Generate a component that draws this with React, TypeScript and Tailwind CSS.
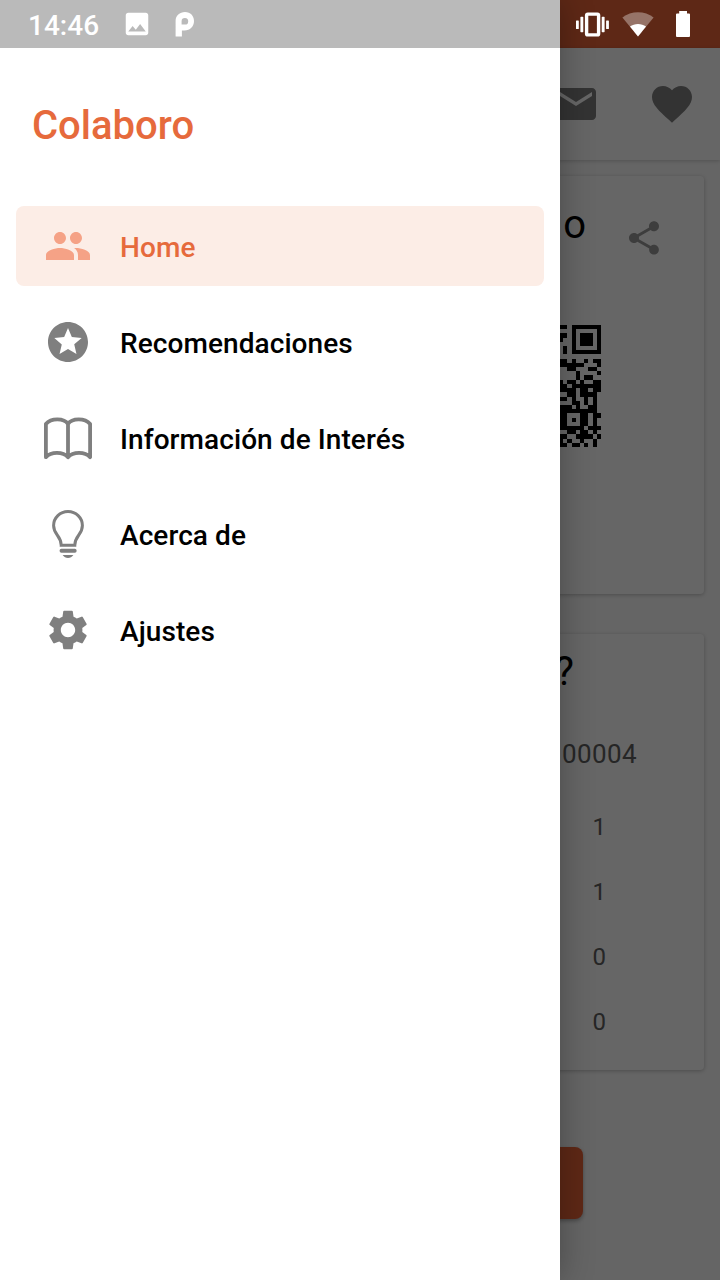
// Colaboro app shell: the home page dimmed behind the open navigation drawer.

import type { ReactNode } from "react";
import {
  MdEmail,
  MdFavorite,
  MdImage,
  MdPeople,
  MdSettings,
  MdShare,
  MdStars,
} from "react-icons/md";

function BookIcon() {
  return (
    <svg viewBox="0 0 48 44" className="mt-px h-11 w-12" fill="none" stroke="currentColor" strokeWidth="3.8" strokeLinejoin="round">
      <path d="M24 7C20 .8 7 .8 1.9 7V40.2C7 34.5 19 34.5 24 40.2C29 34.5 41 34.5 46.1 40.2V7C41 .8 28 .8 24 7ZM24 7V40.2" />
    </svg>
  );
}

function BulbIcon() {
  return (
    <svg viewBox="0 0 32 48" className="h-12 w-8" fill="none" stroke="currentColor" strokeWidth="3">
      <path d="M9.2 35.2C9.2 25.5 1.6 25 1.6 15.5A14.4 14 0 0 1 30.4 15.5C30.4 25 22.8 25.5 22.8 35.2Z" />
      <rect x="7.6" y="38.8" width="17" height="4" rx="1.8" fill="currentColor" stroke="none" />
      <path d="M10.6 45H21.4C20 47 18.2 48 16 48S12 47 10.6 45Z" fill="currentColor" stroke="none" />
    </svg>
  );
}

function ParkingIcon() {
  return (
    <svg viewBox="0 0 19 25" className="h-[25px] w-[19px]" fill="currentColor">
      <path
        fillRule="evenodd"
        d="M.6 24.6V9C.6 3.6 4.8 0 10 0C15.5 0 19 4 19 8.9C19 14.5 15 18.4 9.5 18.4H6.9V24.6ZM6.6 12.6H9.7A3.3 3.3 0 1 0 6.6 9.3Z"
      />
    </svg>
  );
}

function VibrateIcon() {
  return (
    <svg viewBox="0 0 33 25" className="h-[25px] w-[33px]" fill="currentColor">
      <rect x="10.6" y="2.1" width="12" height="20.8" rx="1.2" fill="none" stroke="currentColor" strokeWidth="3.4" />
      <rect x="4.4" y="4.8" width="2.9" height="15.4" rx=".6" />
      <rect x="0" y="8.4" width="2.8" height="8.6" rx=".6" />
      <rect x="25.7" y="4.8" width="2.9" height="15.4" rx=".6" />
      <rect x="30.1" y="8.4" width="2.8" height="8.6" rx=".6" />
    </svg>
  );
}

function WifiIcon() {
  return (
    <svg viewBox="0 0 32 25" className="h-[25px] w-8" fill="currentColor">
      <path d="M16 24.5L.4 5.4C9-1.6 23-1.6 31.6 5.4Z" opacity="0.35" />
      <path d="M16 24.5L8 14.6C12.4 11 19.6 11 24 14.6Z" />
    </svg>
  );
}

function BatteryIcon() {
  return (
    <svg viewBox="0 0 14 26" className="h-[26px] w-3.5" fill="currentColor">
      <path d="M3.2 0H11V2.5H13Q14 2.5 14 3.5V25Q14 26 13 26H1Q0 26 0 25V3.5Q0 2.5 1 2.5H3.2Z" />
    </svg>
  );
}

/** Right-hand columns of the membership code, one string per module row. */
const QR_ROWS: ReadonlyArray<string> = [
  "1101111111",
  "0001000001",
  "1101011101",
  "1001011101",
  "0001011101",
  "0101000001",
  "0101111111",
  "0000000000",
  "1101001011",
  "1111110001",
  "0011000110",
  "0000100001",
  "0000101100",
  "1011010011",
  "1101111111",
  "1111011011",
  "0011011110",
  "1101001010",
  "0001101010",
  "1110100110",
  "1111111110",
  "1100011011",
  "1101011010",
  "1100011010",
  "1111110111",
  "0011011010",
  "1100111101",
  "1010010010",
  "1101101010",
];

function QrCode() {
  return (
    <svg viewBox="0 0 10 29" className="h-[122px] w-[42px]" preserveAspectRatio="none" shapeRendering="crispEdges">
      {QR_ROWS.map((row, y) =>
        row.split("").map((cell, x) =>
          cell === "1" ? <rect key={`${x}-${y}`} x={x} y={y} width="1" height="1" /> : null,
        ),
      )}
    </svg>
  );
}

const MENU: ReadonlyArray<{ label: string; icon: ReactNode; active?: boolean }> = [
  { label: "Home", icon: <MdPeople size={48} />, active: true },
  { label: "Recomendaciones", icon: <MdStars size={48} /> },
  { label: "Información de Interés", icon: <BookIcon /> },
  { label: "Acerca de", icon: <BulbIcon /> },
  { label: "Ajustes", icon: <MdSettings size={48} /> },
];

const COUNTS: ReadonlyArray<string> = ["1", "1", "0", "0"];

function Page() {
  return (
    <div className="flex h-full flex-col bg-[#fdfdfd]">
      <div className="h-12 shrink-0 bg-[#eb6439]" />
      <header className="flex h-28 shrink-0 items-center justify-end gap-12 bg-white pr-6 text-[#808080] shadow-[0_1px_4px_rgba(0,0,0,0.2)]">
        <MdEmail size={48} />
        <MdFavorite size={48} />
      </header>

      <section className="mx-4 mt-4 flex h-[418px] shrink-0 flex-col rounded bg-white shadow-[0_1px_4px_rgba(0,0,0,0.25)]">
        <div className="flex items-start justify-end pt-6 pr-10">
          <h2 className="mt-px mr-[37px] text-[40px] leading-[48px] tracking-wide">o</h2>
          <MdShare size={40} className="mt-[18px] text-[#999]" />
        </div>
        <div className="mt-[67px] flex justify-end pr-[103px]">
          <QrCode />
        </div>
      </section>

      <section className="mx-4 mt-10 flex h-[436px] shrink-0 flex-col items-end rounded bg-white shadow-[0_1px_4px_rgba(0,0,0,0.25)]">
        <h2 className="mt-3.5 mr-[130px] text-[40px] leading-[48px]">?</h2>
        <p className="mt-[41px] mr-[67px] text-[26px] leading-[34px] tracking-[0.4px] text-[#606060]">00004</p>
        <ul className="mt-6 mr-[98px] text-right text-2xl leading-[65px] text-[#606060]">
          {COUNTS.map((count, i) => (
            <li key={i}>{count}</li>
          ))}
        </ul>
      </section>

      <div className="mt-[77px] ml-[137px] h-[72px] w-[446px] shrink-0 rounded-lg bg-[#eb6439] shadow-[0_2px_4px_rgba(0,0,0,0.3)]" />
    </div>
  );
}

function Drawer() {
  return (
    <aside className="absolute inset-y-0 left-0 w-[560px] bg-white pt-12 shadow-[0_0_32px_rgba(0,0,0,0.3)]">
      <h1 className="mt-[54px] ml-8 text-[40px] leading-[48px] font-medium text-[#e66a3c]">Colaboro</h1>
      <nav className="mx-4 mt-14 flex flex-col gap-4">
        {MENU.map((item) => (
          <a
            key={item.label}
            className={`flex h-20 items-center rounded-lg px-7 ${item.active ? "bg-[#fcede6]" : ""}`}
          >
            <span className={`flex w-12 justify-center ${item.active ? "text-[#f5a286]" : "text-[#7f7f7f]"}`}>
              {item.icon}
            </span>
            <span
              className={`ml-7 pt-1 text-[28px] leading-9 font-medium tracking-[0.08px] ${item.active ? "text-[#e66a3c]" : "text-black"}`}
            >
              {item.label}
            </span>
          </a>
        ))}
      </nav>
    </aside>
  );
}

function StatusBar() {
  return (
    <div className="absolute inset-x-0 top-0 flex h-12 text-white">
      <div className="flex w-[560px] items-center bg-[#bababa] pl-7">
        <span className="w-[94px] pt-1 text-[28px] leading-9 font-medium">14:46</span>
        <MdImage size={30} />
        <span className="ml-[23px]">
          <ParkingIcon />
        </span>
      </div>
      <div className="flex flex-1 items-center pl-4">
        <VibrateIcon />
        <span className="ml-[13px]">
          <WifiIcon />
        </span>
        <span className="ml-[22px]">
          <BatteryIcon />
        </span>
      </div>
    </div>
  );
}

export default function App() {
  return (
    <div className="relative h-[1280px] w-[720px] overflow-hidden font-['Roboto',sans-serif] text-black">
      <Page />
      <div className="absolute inset-0 bg-black/60" />
      <Drawer />
      <StatusBar />
    </div>
  );
}
